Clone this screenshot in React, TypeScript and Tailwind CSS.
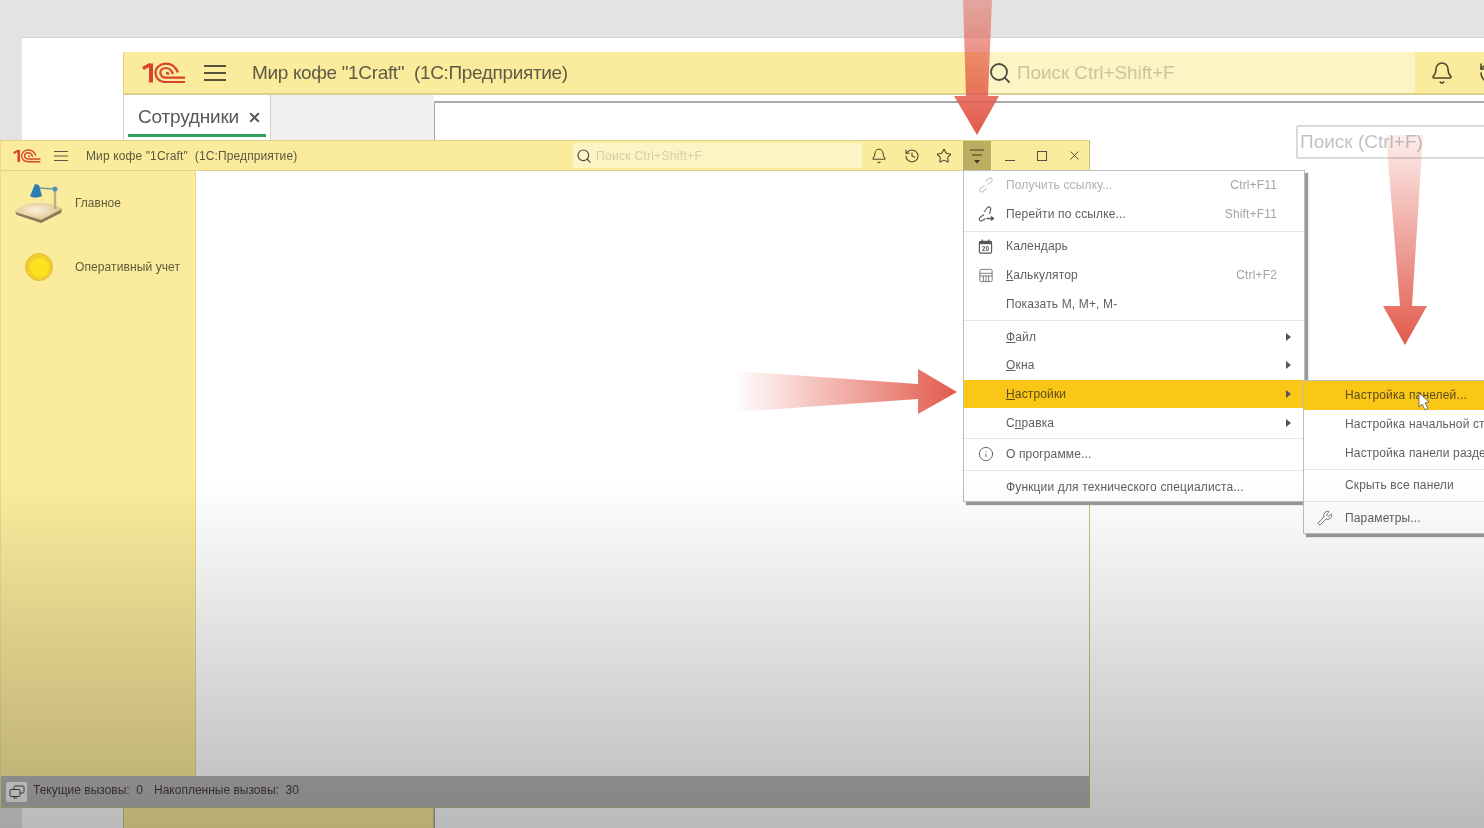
import { Bell, Star, History, Search, X, Info, Wrench } from "lucide-react";
import type { ReactNode } from "react";

function Logo({ className }: { className: string }) {
  return (
    <svg viewBox="0 0 44 22" className={className} fill="none" stroke="#d8442f">
      <path d="M1 6.5 L8 2.5" strokeWidth="3.2" />
      <path d="M9 1.5 V20.5" strokeWidth="4" />
      <path d="M43 20 H24 C17 20 13.5 15.5 13.5 10.8 C13.5 5.5 18 1.6 24 1.6 C30 1.6 34 5.5 36 10.5" strokeWidth="2.2" />
      <path d="M43 15.6 H24 C21 15.6 18.3 13.8 18.3 10.8 C18.3 8 20.5 6 24 6 C27 6 29.6 8.5 31 12" strokeWidth="2.2" />
      <path d="M24 11 C25 11 26 11.5 27 12" strokeWidth="2.4" />
    </svg>
  );
}

function Burger({ className }: { className: string }) {
  return (
    <svg viewBox="0 0 22 18" className={className} fill="none" stroke="currentColor" strokeWidth="1.8">
      <path d="M0 2H22M0 9H22M0 16H22" />
    </svg>
  );
}

function Lamp() {
  return (
    <svg viewBox="0 0 48 40" className="w-[48px] h-[40px]">
      <defs>
        <radialGradient id="pad" cx="0.45" cy="0.4" r="0.6">
          <stop offset="0" stopColor="#fbf4dc" />
          <stop offset="1" stopColor="#dcbd87" />
        </radialGradient>
      </defs>
      <path d="M0 29 C6 22 14 20 24 20 C34 20 42 22 47 26 L26 38 Z" fill="url(#pad)" />
      <path d="M0 29 L26 37 L47 26 L46 30 L26 40 L2 32 Z" fill="#8b7a58" />
      <path d="M40 7 V26" stroke="#b9b08a" strokeWidth="2.4" />
      <path d="M24 5 L39 6" stroke="#6f97a8" strokeWidth="1.6" />
      <path d="M20 1 L24 2 L27 13 C22 15 18 15 15 13 Z" fill="#2e7db0" />
      <circle cx="40" cy="6" r="2.5" fill="#4f93b8" />
    </svg>
  );
}

function MenuGlyph() {
  return (
    <svg viewBox="0 0 16 18" className="w-[16px] h-[18px]" fill="none" stroke="#3f3a1e" strokeWidth="1.2">
      <path d="M1 3H15M3 8H13" />
      <path d="M5 13H11L8 16.5Z" fill="#3f3a1e" stroke="none" />
    </svg>
  );
}

function Cal() {
  return (
    <svg viewBox="0 0 16 16" className="w-[15px] h-[15px]">
      <rect x="1.5" y="2.5" width="13" height="12.5" rx="1.5" fill="none" stroke="#555" strokeWidth="1.2" />
      <rect x="1.5" y="2.5" width="13" height="3" fill="#555" />
      <path d="M4.5 0.5V3M11.5 0.5V3" stroke="#555" strokeWidth="1.4" />
      <text x="8" y="13" textAnchor="middle" fontSize="7" fontWeight="700" fontFamily="Liberation Sans" fill="#555">20</text>
    </svg>
  );
}

function Calc() {
  return (
    <svg viewBox="0 0 16 16" className="w-[14px] h-[15px]" fill="none" stroke="#777" strokeWidth="1.1">
      <rect x="1" y="1" width="14" height="14" rx="1.5" />
      <path d="M1 5.5H15M1 8.5H15M5 8.5V15M8 8.5V15M11 8.5V15" />
    </svg>
  );
}

function ChainLink() {
  return (
    <svg viewBox="0 0 16 16" className="w-[16px] h-[16px]" fill="none" stroke="#c8c8c8" strokeWidth="1.2">
      <path d="M6.5 8.5 L3 11 C0.5 13 2.5 16 5 14.5 L8.5 11.5" />
      <path d="M9.5 7.5 L13 5 C15.5 3 13.5 0 11 1.5 L7.5 4.5" />
    </svg>
  );
}

function GoLink() {
  return (
    <svg viewBox="0 0 16 16" className="w-[16px] h-[16px]" fill="none" stroke="#5a5a5a" strokeWidth="1.1">
      <path d="M6 8.5 L2.5 11 C0 13 2 16 4.5 14.5 L7.5 12.5" />
      <path d="M6 6 L9.5 1.5 C11 0 13.5 1.5 12.5 4 L11.5 8" />
      <path d="M8.5 12.5H15M13 10.5L15.5 12.5L13 14.5" strokeWidth="1.4" />
    </svg>
  );
}

function Row({ icon, children, hint, arrow, muted, active, sub }: {
  icon?: ReactNode; children: ReactNode; hint?: string; arrow?: boolean; muted?: boolean; active?: boolean; sub?: boolean;
}) {
  return (
    <div className={`flex items-center h-[28.7px] tracking-[0.15px] ${active ? "bg-[#fbc716] text-[#5b4a1c]" : muted ? "text-[#b0b0b0]" : "text-[#5f5f5f]"}`}>
      <span className={`flex justify-center shrink-0 ${sub ? "w-[41px]" : "w-[42px] pl-[1px]"}`}>{icon}</span>
      <span className="flex-1 whitespace-nowrap">{children}</span>
      {hint && <span className="text-[#a4a4a4] mr-[27px]">{hint}</span>}
      {arrow && <span className="w-0 h-0 mr-[13px] border-y-[4px] border-y-transparent border-l-[5px] border-l-[#555]" />}
    </div>
  );
}

export default function App() {
  return (
    <div className="relative w-[1484px] h-[828px] overflow-hidden bg-[#e3e3e3] font-['Liberation_Sans',sans-serif] blur-[0.4px]">
      {/* Window behind */}
      <div className="absolute left-[22px] top-[37px] w-[1480px] h-[800px] bg-white border-t border-[#d6d6d6] pl-[101px] pt-[14px]">
        <div className="flex flex-col w-[1379px] h-full">
          <div className="flex items-center h-[43px] shrink-0 bg-[#fbeb9c] border-l border-b-2 border-[#dcd08c] text-[#5e5a45]">
            <Logo className="ml-[18px] w-[44px] h-[22px]" />
            <Burger className="ml-[18px] w-[22px] h-[18px] text-[#57533a]" />
            <span className="ml-[26px] pt-[1px] flex-1 text-[19px] whitespace-pre tracking-[-0.35px]">Мир кофе "1Craft"  (1С:Предприятие)</span>
            <div className="flex items-center w-[430px] h-full bg-[#fdf4c6] text-[#c9c4a2] text-[19px]">
              <Search size={24} strokeWidth={1.8} className="text-[#4e4e42] ml-[3px] mr-[5px]" />
              <span className="tracking-[-0.1px] pt-[1px]">Поиск Ctrl+Shift+F</span>
            </div>
            <Bell size={24} strokeWidth={1.6} className="ml-[15px] text-[#4e4a30]" />
            <History size={24} strokeWidth={1.6} className="ml-[24px] text-[#4e4a30] shrink-0" />
          </div>
          <div className="flex flex-1">
            <div className="flex flex-col w-[311px] shrink-0 bg-[#fbeb9c]">
              <div className="flex h-[45px] bg-[#f0f0f0]">
                <div className="flex items-center w-[148px] h-full bg-white border-x border-[#d4d4c8] pl-[14px] relative text-[#5a5a5a] text-[19px]">
                  <span className="tracking-[-0.2px]">Сотрудники</span>
                  <X size={15} strokeWidth={3.2} className="ml-[8px]" />
                  <span className="absolute left-[4px] right-[4px] top-[39px] h-[3px] bg-[#2ea45f]" />
                </div>
              </div>
              <div className="flex-1 border-x border-[#cfc487]" />
            </div>
            <div className="flex-1 mt-[6px] border-l border-t-2 border-[#a9a9a9] bg-white pt-[22px] pl-[861px]">
              <div className="w-[230px] h-[34px] flex items-center border-2 border-[#dadada] rounded-[2px] pl-[2px] pt-[1px] text-[19px] text-[#c2c2c2]">
                Поиск (Ctrl+F)
              </div>
            </div>
          </div>
        </div>
      </div>

      {/* Front window */}
      <div className="absolute left-0 top-[140px] w-[1090px] h-[668px] flex flex-col bg-white border-l border-l-[#e8dc94] border-r border-b border-r-[#c4be84] border-b-[#c4be84] text-[12px]">
        <div className="flex items-center h-[31px] shrink-0 bg-[#fbeb9c] border-y border-[#dfd38c] text-[#5c583f]">
          <Logo className="ml-[12px] w-[28px] h-[14px]" />
          <Burger className="ml-[13px] w-[14px] h-[12px]" />
          <span className="ml-[18px] w-[487px] whitespace-pre tracking-[0.12px]">Мир кофе "1Craft"  (1С:Предприятие)</span>
          <div className="flex items-center w-[289px] h-[25px] bg-[#fdf4c6] text-[#d3cea8]">
            <Search size={16} strokeWidth={1.8} className="text-[#4e4e42] ml-[3px] mr-[4px]" />
            <span className="tracking-[0.3px]">Поиск Ctrl+Shift+F</span>
          </div>
          <Bell size={16} strokeWidth={1.6} className="ml-[9px] text-[#4e4a30]" />
          <History size={16} strokeWidth={1.6} className="ml-[17px] text-[#4e4a30]" />
          <Star size={16} strokeWidth={1.6} className="ml-[16px] text-[#4e4a30]" />
          <div className="ml-[11px] flex items-center justify-center w-[28px] h-full bg-[#bcae60]">
            <MenuGlyph />
          </div>
          <span className="ml-[14px] w-[10px] h-[1.5px] mt-[10px] bg-[#55513a]" />
          <span className="ml-[22px] w-[10px] h-[10px] border border-[#55513a]" />
          <X size={15} strokeWidth={1.6} className="ml-[20px] text-[#55513a]" />
        </div>
        <div className="flex flex-1">
          <div className="w-[195px] shrink-0 bg-[#fbeb9c] border-r border-[#e4d98f] text-[#5f5a3c]">
            <div className="flex items-center h-[64px] pl-[14px] gap-[12px]">
              <Lamp />
              <span>Главное</span>
            </div>
            <div className="flex items-center h-[64px] pl-[24px] gap-[22px]">
              <span className="flex items-center justify-center w-[28px] h-[28px] rounded-full bg-[#f3cf2c] border border-[#e3bb3a]">
                <span className="w-[19px] h-[19px] rounded-full bg-[#fde21f]" />
              </span>
              <span className="tracking-[0.1px]">Оперативный учет</span>
            </div>
          </div>
          <div className="flex-1" />
        </div>
        <div className="flex items-center h-[31px] shrink-0 bg-[#b4b4b4] text-[#4a3a3a]">
          <span className="ml-[5px] mr-[6px] flex items-center justify-center w-[21px] h-[20px] rounded-[2px] bg-[#f0f0f0]">
            <svg viewBox="0 0 16 14" className="w-[16px] h-[14px]" fill="none" stroke="#444" strokeWidth="1">
              <rect x="5" y="1" width="10" height="7" rx="1" />
              <rect x="1" y="4.5" width="10" height="7" rx="1" fill="#f0f0f0" />
              <path d="M4 13H8" />
            </svg>
          </span>
          <span className="pb-[3px]">Текущие вызовы:&nbsp; 0</span>
          <span className="ml-[11px] pb-[3px]">Накопленные вызовы:&nbsp; 30</span>
        </div>
      </div>

      {/* Main menu */}
      <div className="absolute left-[963px] top-[170px] w-[342px] bg-white border border-[#bdbdbd] shadow-[3px_3px_1px_#9a9a9a] text-[12px]">
        <div className="pb-[2.6px] border-b border-[#e6e6e6]">
          <Row muted icon={<ChainLink />} hint="Ctrl+F11">Получить ссылку...</Row>
          <Row icon={<GoLink />} hint="Shift+F11">Перейти по ссылке...</Row>
        </div>
        <div className="pb-[2px] border-b border-[#e6e6e6]">
          <Row icon={<Cal />}>Кален<u>д</u>арь</Row>
          <Row icon={<Calc />} hint="Ctrl+F2"><u>К</u>алькулятор</Row>
          <Row>Показать М, М+, М-</Row>
        </div>
        <div className="pt-[1.3px] pb-[1px] border-b border-[#e6e6e6]">
          <Row arrow><u>Ф</u>айл</Row>
          <Row arrow><u>О</u>кна</Row>
          <Row arrow active><u>Н</u>астройки</Row>
          <Row arrow>С<u>п</u>равка</Row>
        </div>
        <div className="pt-[1px] pb-[1px] border-b border-[#e6e6e6]">
          <Row icon={<Info size={16} strokeWidth={1.3} className="text-[#555]" />}>О программе...</Row>
        </div>
        <div className="pt-[2px]">
          <Row>Функции для технического специалиста...</Row>
        </div>
      </div>

      {/* Sub menu */}
      <div className="absolute left-[1303px] top-[380px] w-[300px] bg-white border border-[#bdbdbd] shadow-[3px_3px_1px_#9a9a9a] text-[12px]">
        <div className="pb-[2px] border-b border-[#e6e6e6]">
          <Row sub active>Настройка панелей...</Row>
          <Row sub>Настройка начальной страницы...</Row>
          <Row sub>Настройка панели разделов...</Row>
        </div>
        <div className="pt-[1px] pb-[1px] border-b border-[#e6e6e6]">
          <Row sub>Скрыть все панели</Row>
        </div>
        <div className="pt-[1.5px] pb-[1px]">
          <Row sub icon={<Wrench size={16} strokeWidth={1.2} className="text-[#555]" />}>Параметры...</Row>
        </div>
      </div>

      {/* Shade over the lower part of the picture */}
      <div className="absolute inset-x-0 top-[480px] bottom-0 pointer-events-none bg-linear-to-b from-transparent to-[rgba(0,0,0,0.27)]" />

      {/* Arrows and cursor */}
      <svg viewBox="0 0 1484 828" className="absolute inset-0 w-[1484px] h-[828px] pointer-events-none">
        <defs>
          <linearGradient id="a1" gradientUnits="userSpaceOnUse" x1="0" y1="0" x2="0" y2="135">
            <stop offset="0" stopColor="#e25a4b" stopOpacity="0.45" />
            <stop offset="1" stopColor="#e25a4b" />
          </linearGradient>
          <linearGradient id="a2" gradientUnits="userSpaceOnUse" x1="735" y1="0" x2="957" y2="0">
            <stop offset="0" stopColor="#e25a4b" stopOpacity="0" />
            <stop offset="1" stopColor="#e25a4b" />
          </linearGradient>
          <linearGradient id="a3" gradientUnits="userSpaceOnUse" x1="0" y1="135" x2="0" y2="345">
            <stop offset="0" stopColor="#e25a4b" stopOpacity="0.1" />
            <stop offset="1" stopColor="#e25a4b" />
          </linearGradient>
        </defs>
        <path d="M963 0H992L988 96H999L977 135L954 96H966Z" fill="url(#a1)" />
        <path d="M735 371L918 384V369L957 392L918 414V399L735 412Z" fill="url(#a2)" />
        <path d="M1386 135H1423L1412 306H1427L1405 345L1383 306H1400Z" fill="url(#a3)" />
        <path d="M1419 393V407L1422 404L1425 410L1428 408L1425 403L1429 402Z" fill="#fff" stroke="#555" strokeWidth="0.8" />
      </svg>
    </div>
  );
}
